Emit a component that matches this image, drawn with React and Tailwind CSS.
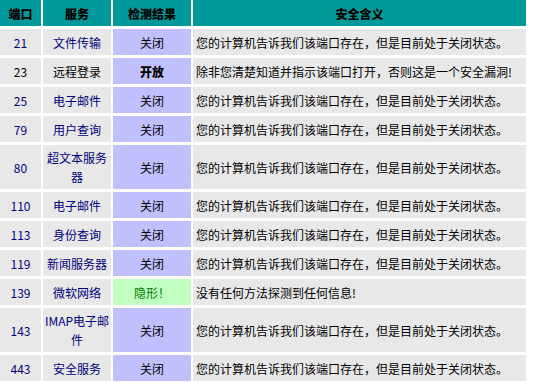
const rows = [
  { port: '21', svc: '文件传输', res: '关闭', desc: '您的计算机告诉我们该端口存在，但是目前处于关闭状态。' },
  { port: '23', svc: '远程登录', res: '开放', open: true, desc: '除非您清楚知道并指示该端口打开，否则这是一个安全漏洞!' },
  { port: '25', svc: '电子邮件', res: '关闭', desc: '您的计算机告诉我们该端口存在，但是目前处于关闭状态。' },
  { port: '79', svc: '用户查询', res: '关闭', desc: '您的计算机告诉我们该端口存在，但是目前处于关闭状态。' },
  { port: '80', svc: ['超文本服务', '器'], res: '关闭', desc: '您的计算机告诉我们该端口存在，但是目前处于关闭状态。' },
  { port: '110', svc: '电子邮件', res: '关闭', desc: '您的计算机告诉我们该端口存在，但是目前处于关闭状态。' },
  { port: '113', svc: '身份查询', res: '关闭', desc: '您的计算机告诉我们该端口存在，但是目前处于关闭状态。' },
  { port: '119', svc: '新闻服务器', res: '关闭', desc: '您的计算机告诉我们该端口存在，但是目前处于关闭状态。' },
  { port: '139', svc: '微软网络', res: '隐形！', stealth: true, desc: '没有任何方法探测到任何信息!' },
  { port: '143', svc: ['IMAP电子邮', '件'], res: '关闭', desc: '您的计算机告诉我们该端口存在，但是目前处于关闭状态。' },
  { port: '443', svc: '安全服务', res: '关闭', desc: '您的计算机告诉我们该端口存在，但是目前处于关闭状态。' },
];

function Head({ children }) {
  return (
    <div className="flex items-center justify-center bg-[#009999] text-black">
      <span className="font-black">{children}</span>
    </div>
  );
}

export default function App() {
  return (
    <div
      className="h-[383px] w-[540px] bg-white text-[12px] leading-[19px]"
      style={{ fontFamily: '"Noto Sans CJK SC", "Noto Sans", sans-serif' }}
    >
      <div className="grid w-[526px] grid-cols-[41px_68px_78px_333px] grid-rows-[26px_26px_26px_26px_26px_44px_26px_26px_26px_26px_44px_26px] gap-x-[2px] gap-y-[3px]">
        <Head>端口</Head>
        <Head>服务</Head>
        <Head>检测结果</Head>
        <Head>安全含义</Head>
        {rows.map((r) => (
          <div key={r.port} className="contents">
            <div className={r.open ? 'flex items-center justify-center bg-[#e8e8e8] text-black' : 'flex items-center justify-center bg-[#e8e8e8] text-[#000080]'}>
              {r.port}
            </div>
            <div
              className={
                r.open
                  ? 'flex flex-col items-center justify-center bg-[#e8e8e8] text-center text-black'
                  : 'flex flex-col items-center justify-center bg-[#e8e8e8] text-center text-[#000080]'
              }
            >
              {Array.isArray(r.svc) ? r.svc.map((s) => <span key={s}>{s}</span>) : r.svc}
            </div>
            <div
              className={
                r.stealth
                  ? 'flex items-center justify-center bg-[#c0ffc0] text-[#008000]'
                  : 'flex items-center justify-center bg-[#c0c0ff] text-black'
              }
            >
              <span className={r.open ? 'font-black' : ''}>{r.res}</span>
            </div>
            <div className="flex items-center bg-[#e8e8e8] pl-[3px] text-black">{r.desc}</div>
          </div>
        ))}
      </div>
    </div>
  );
}
